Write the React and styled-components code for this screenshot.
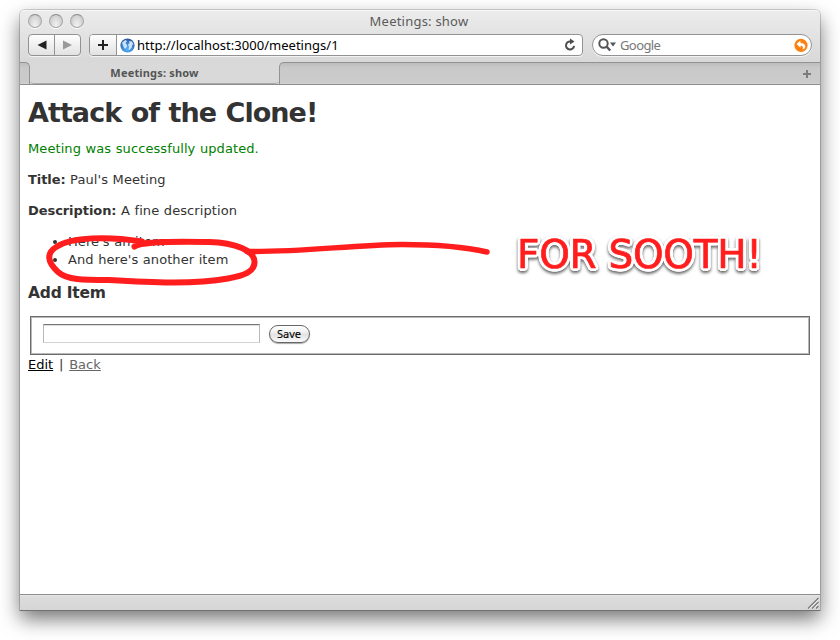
import React from "react";
import styled, { createGlobalStyle } from "styled-components";

const Global = createGlobalStyle`
  * { box-sizing: border-box; }
  html, body { margin: 0; background: #fff; }
  body { width: 840px; height: 640px; overflow: hidden; }
`;

const Desktop = styled.div`
  position: relative;
  width: 840px;
  height: 640px;
  padding: 10px 20px 29px;
  overflow: hidden;
  background: #fff;
`;

const Window = styled.div`
  display: flex;
  flex-direction: column;
  width: 800px;
  height: 600px;
  border-radius: 5px 5px 0 0;
  background: #fff;
  box-shadow: 0 0 0 1px rgba(0, 0, 0, 0.16), 0 1px 0 #888, 0 9px 20px rgba(0, 0, 0, 0.55);
`;

const Chrome = styled.header`
  display: flex;
  flex-direction: column;
  height: 52px;
  border-radius: 5px 5px 0 0;
  border-top: 1px solid #f6f6f6;
  background: linear-gradient(#ececec, #d8d8d8);
`;

const TitleBar = styled.div`
  display: grid;
  grid-template-columns: 120px 1fr 122px;
  align-items: center;
  height: 20px;
  padding-left: 8px;
`;

const Lights = styled.div`
  display: flex;
  gap: 7px;
`;

const Light = styled.span`
  width: 14px;
  height: 14px;
  border: 1px solid #a6a6a6;
  border-top-color: #8a8a8a;
  border-radius: 50%;
  background: radial-gradient(ellipse at 50% 85%, #f2f2f2, #d8d8d8 55%, #bcbcbc);
  box-shadow: 0 1px 0 #fff;
`;

const Title = styled.div`
  margin-left: -8px;
  font: 13px/20px "Noto Sans", sans-serif;
  letter-spacing: 0.22px;
  color: #5a5a5a;
  text-align: center;
`;

const Toolbar = styled.div`
  display: flex;
  height: 22px;
  margin-top: 3px;
  padding: 0 8px;
`;

const ButtonGroup = styled.div`
  display: flex;
  width: 53px;
  height: 22px;
  margin-right: 8px;
  border: 1px solid #929292;
  border-radius: 4px;
  background: linear-gradient(#fefefe, #e2e2e2);
  box-shadow: 0 1px 0 #f3f3f3;
`;

const ToolButton = styled.button`
  display: flex;
  flex: ${(p) => (p.$width ? `0 0 ${p.$width}` : "1")};
  align-self: stretch;
  align-items: center;
  justify-content: center;
  padding: 0;
  border: 0;
  border-left: ${(p) => (p.$divided ? "1px solid #929292" : "0")};
  border-right: ${(p) => (p.$divideEnd ? "1px solid #929292" : "0")};
  background: ${(p) => (p.$divideEnd ? "linear-gradient(#fefefe, #e2e2e2)" : "none")};
`;

const Address = styled.div`
  display: flex;
  align-items: center;
  width: 494px;
  height: 22px;
  margin-right: 9px;
  border: 1px solid #929292;
  border-radius: 4px;
  overflow: hidden;
  background: #fff;
  box-shadow: 0 1px 0 #f3f3f3;
`;

const GlobeIcon = styled.svg`
  flex: none;
  margin: 0 2.5px 0 2.5px;
`;

const Url = styled.span`
  flex: 1;
  font: 13px/20px "Noto Sans", sans-serif;
  letter-spacing: 0.02px;
  color: #000;
`;

const ReloadIcon = styled.svg`
  flex: none;
  margin-right: 1px;
`;

const Search = styled.div`
  display: flex;
  align-items: center;
  width: 220px;
  height: 22px;
  padding: 0 3px 0 5px;
  border: 1px solid #929292;
  border-radius: 11px;
  background: #fff;
  box-shadow: 0 1px 0 #f3f3f3;
`;

const Placeholder = styled.span`
  flex: 1;
  margin-left: 4px;
  font: 13px/20px "Noto Sans", sans-serif;
  letter-spacing: -0.6px;
  color: #777;
`;

const Tabs = styled.nav`
  display: flex;
  height: 23px;
  border-bottom: 1px solid #8e8e8e;
  background: #d9d9d9;
`;

const TabFiller = styled.div`
  display: flex;
  align-items: center;
  justify-content: flex-end;
  flex: ${(p) => (p.$lead ? "0 0 10px" : "1")};
  padding-right: ${(p) => (p.$lead ? "0" : "9px")};
  border: 0 solid #929292;
  border-width: ${(p) => (p.$lead ? "1px 1px 0 0" : "1px 0 0 1px")};
  border-radius: ${(p) => (p.$lead ? "0 5px 0 0" : "5px 0 0 0")};
  background: linear-gradient(#bdbdbd, #c9c9c9 5px, #cbcbcb 20px, #d6d6d6 21px);
`;

const Tab = styled.div`
  width: 251px;
  height: 22px;
  margin: 0 -1px;
  border: 1px solid transparent;
  border-top: 0;
  border-bottom-color: #aaa;
  border-radius: 0 0 5px 5px;
  font: bold 11px/22px "Noto Sans", sans-serif;
  letter-spacing: 0.17px;
  text-align: center;
  color: #555;
`;

const Page = styled.main`
  flex: 1;
  padding: 0 8px;
  background: #fff;
  color: #333;
  font: 13px/18px "DejaVu Sans", Verdana, sans-serif;
`;

const Heading = styled.h1`
  margin: 9px 0 0;
  height: 37px;
  font-size: 27px;
  line-height: 38px;
  white-space: nowrap;
  letter-spacing: -0.95px;
  word-spacing: 1px;
`;

const Paragraph = styled.p`
  margin: ${(p) => p.$top || "13px"} 0 0;
  height: 18px;
  color: ${(p) => (p.$notice ? "#008000" : "#333")};
  letter-spacing: 0.09px;
  word-spacing: 0.3px;
`;

const Label = styled.b`
  letter-spacing: -0.07px;
`;

const Items = styled.ul`
  margin: 13px 0 0;
  padding: 0 0 0 40px;
`;

const Item = styled.li`
  height: 18px;
  letter-spacing: 0.08px;
  word-spacing: 0.3px;
`;

const SubHeading = styled.h3`
  margin: 14px 0 0;
  font-size: 15.5px;
  line-height: 20px;
  letter-spacing: -0.2px;
`;

const Fieldset = styled.form`
  display: flex;
  width: 780px;
  height: 39px;
  margin: 13px 0 0 2px;
  padding: 7px 11px;
  border: 1px solid #6c6c6c;
  outline: 1px solid #b8b8b8;
  outline-offset: -2px;
`;

const Field = styled.input`
  width: 217px;
  height: 19px;
  margin: 0 9px 0 1px;
  padding: 0 3px;
  border: 1px solid #b8b8b8;
  border-top-color: #777;
  border-bottom-color: #d4d4d4;
  border-radius: 0;
  outline: 0;
  box-shadow: inset 0 1px 0 #ddd;
`;

const Save = styled.button`
  width: 41px;
  height: 18px;
  margin: 1px 0 0 -0.5px;
  padding: 0;
  border: 1px solid #666;
  border-radius: 9px;
  background: linear-gradient(#fff, #eee 45%, #e1e1e1 50%, #fafafa);
  box-shadow: 0 1px 1px #aaa;
  font: 11px/16px "Noto Sans", sans-serif;
  -webkit-text-stroke: 0.1px #000;
  color: #000;
`;

const Links = styled.div`
  display: flex;
  gap: 5.8px;
  height: 18px;
  margin-top: 1px;
`;

const Link = styled.a`
  color: ${(p) => (p.$visited ? "#666" : "#000")};
  text-decoration: underline;
`;

const StatusBar = styled.footer`
  display: flex;
  align-items: flex-end;
  justify-content: flex-end;
  height: 16px;
  border-top: 1px solid #8e8e8e;
  background: linear-gradient(#e6e6e6, #dcdcdc 2px, #d6d6d6);
`;

const Ink = styled.svg`
  position: absolute;
  top: 225px;
  left: 40px;
`;

const outline = Array.from({ length: 20 }, (_, i) => {
  const a = (i / 20) * Math.PI * 2;
  return `${(Math.cos(a) * 3).toFixed(2)}px ${(Math.sin(a) * 3).toFixed(2)}px 0 #fff`;
}).join(", ");

const Callout = styled.div`
  position: absolute;
  top: 231px;
  left: 517px;
  font: 39px/48px "DejaVu Sans", sans-serif;
  letter-spacing: -0.3px;
  white-space: nowrap;
  color: #ff1d1d;
  -webkit-text-stroke: 0.7px #ff1d1d;
  text-shadow: ${outline};
  filter: drop-shadow(0 2px 1.5px rgba(0, 0, 0, 0.6));
`;

const Globe = () => (
  <GlobeIcon width="15" height="15" viewBox="0 0 15 15">
    <defs>
      <radialGradient id="sea" cx="50%" cy="75%" r="70%">
        <stop offset="0" stopColor="#58b4f6" />
        <stop offset="0.6" stopColor="#3a80d0" />
        <stop offset="1" stopColor="#2a5a9c" />
      </radialGradient>
    </defs>
    <circle cx="7.5" cy="7.5" r="7.1" fill="url(#sea)" />
    <path d="M2 5C3 3.500 4 2.500 6 2l1 1.500-1.500 1.500 1.500 2 0 1.500-1.500 2-1 0L3 7.500zM9 3l3 .5L13.500 6.500l-1.500.5 0 2-2.500 3-1-.5.5-2.500L8 6.500l1.500-1.500z" fill="#e3f3ff" opacity=".85" />
  </GlobeIcon>
);

export default function App() {
  return (
    <>
      <Global />
      <Desktop>
        <Window>
          <Chrome>
            <TitleBar>
              <Lights><Light /><Light /><Light /></Lights>
              <Title>Meetings: show</Title>
            </TitleBar>
            <Toolbar>
              <ButtonGroup>
                <ToolButton aria-label="Back">
                  <svg width="10" height="10"><path d="M.5 5 9.500 .5v9z" fill="#222" /></svg>
                </ToolButton>
                <ToolButton $divided aria-label="Forward">
                  <svg width="10" height="10"><path d="M9 5 0 .5v9z" fill="#999" /></svg>
                </ToolButton>
              </ButtonGroup>
              <Address>
                <ToolButton $width="27px" $divideEnd aria-label="Add bookmark">
                  <svg width="10" height="10"><path d="M5 0v10M0 5h10" stroke="#222" strokeWidth="2" /></svg>
                </ToolButton>
                <Globe />
                <Url>http://localhost:3000/meetings/1</Url>
                <ReloadIcon width="19" height="16" viewBox="0 0 19 16">
                  <path d="M8.500 4.500A4 4 0 1 0 12 8.800" fill="none" stroke="#4d4d4d" strokeWidth="2" />
                  <path d="M8 1.500 12.500 4.600 8 7.400z" fill="#4d4d4d" />
                </ReloadIcon>
              </Address>
              <Search>
                <svg width="18" height="14" viewBox="0 0 18 14">
                  <circle cx="5.500" cy="5.500" r="4.200" fill="none" stroke="#555" strokeWidth="2" />
                  <path d="m8.500 8.500 3.700 4" stroke="#555" strokeWidth="2.400" />
                  <path d="M12 4.500h6l-3 4z" fill="#555" />
                </svg>
                <Placeholder>Google</Placeholder>
                <svg width="14" height="14" viewBox="0 0 14 14">
                  <circle cx="7" cy="7.300" r="6.600" fill="#ff800d" />
                  <path d="M2.500 6.100 6.500 2.600v2.500c3 0 4.800 1.300 4.800 3.300 0 1.400-1 2.700-3 3 1-1 1.300-3.700-1.800-3.700v2z" fill="#fff" />
                </svg>
              </Search>
            </Toolbar>
          </Chrome>
          <Tabs>
            <TabFiller $lead />
            <Tab>Meetings: show</Tab>
            <TabFiller>
              <svg width="8" height="8"><path d="M4 0v8M0 4h8" stroke="#7c7c7c" strokeWidth="2" /></svg>
            </TabFiller>
          </Tabs>
          <Page>
            <Heading>Attack of the Clone!</Heading>
            <Paragraph $top="9px" $notice>Meeting was successfully updated.</Paragraph>
            <Paragraph><Label>Title:</Label> Paul's Meeting</Paragraph>
            <Paragraph><Label>Description:</Label> A fine description</Paragraph>
            <Items>
              <Item>Here's an item</Item>
              <Item>And here's another item</Item>
            </Items>
            <SubHeading>Add Item</SubHeading>
            <Fieldset>
              <Field aria-label="New item" />
              <Save type="button">Save</Save>
            </Fieldset>
            <Links><Link>Edit</Link><span>|</span><Link $visited>Back</Link></Links>
          </Page>
          <StatusBar>
            <svg width="14" height="14"><path d="M2 12.500 12.500 2M6 12.500 12.500 6M10 12.500l2.500-2.500" stroke="#777" strokeWidth="1.200" /><path d="M3.500 12.500l9-9M7.500 12.500l5-5" stroke="#f5f5f5" strokeWidth=".8" /></svg>
          </StatusBar>
        </Window>
        <Ink width="460" height="65" viewBox="40 225 460 65" fill="none" stroke="#ff1d1d" strokeLinecap="round" strokeLinejoin="round">
          <path strokeWidth="6" d="M134.500 246.500C143 241 180 241.500 209 242C236 242.500 254.500 251 254.500 262C254.500 272 244 275.500 228 278.500C194 284.500 151 282.500 109 280C83 280 67 280 58 272C47 262 46 253 57 246.500C72 237 107 236 142 241.500" />
          <path strokeWidth="5.500" d="M247 251.500C304 252 351 245 402 244.500C436 244.500 461 246 487 252" />
        </Ink>
        <Callout>FOR SOOTH!</Callout>
      </Desktop>
    </>
  );
}
